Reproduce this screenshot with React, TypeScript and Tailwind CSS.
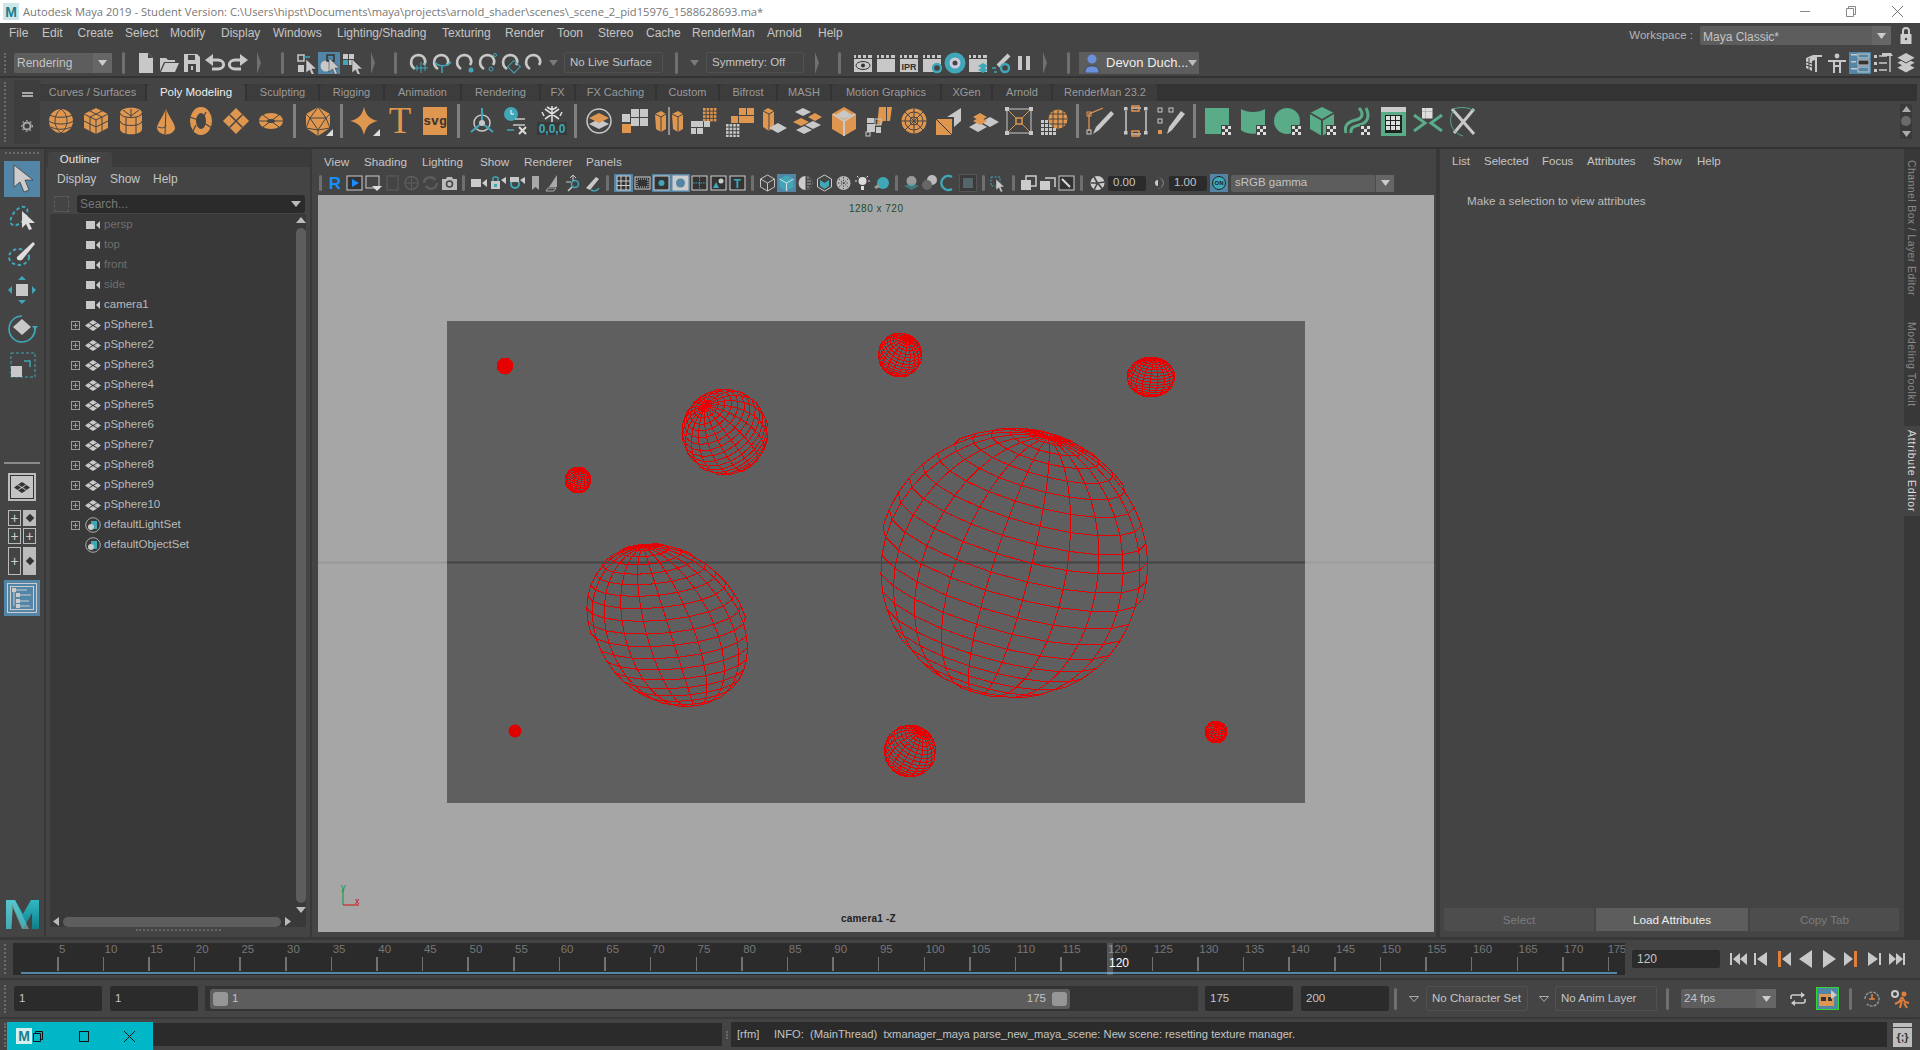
import React from 'react';

const o = '#df964f', g = '#c8c8c8', t = '#3fa7b7', m = '#5aab88', d = '#444444';

function S({ s = 32, children }: { s?: number; children?: React.ReactNode }) {
  return <svg width={s} height={s} viewBox={`0 0 ${s} ${s}`} className="block shrink-0">{children}</svg>;
}
const L = ({ p, c = d, w = 1 }: { p: string; c?: string; w?: number }) => <path d={p} fill="none" stroke={c} strokeWidth={w} />;
const F = ({ p, c = g }: { p: string; c?: string }) => <path d={p} fill={c} />;
const Grid = ({ x, y, n, a, c = g, gap = 1 }: { x: number; y: number; n: number; a: number; c?: string; gap?: number }) => (
  <g>{Array.from({ length: n * n }).map((_, i) => <rect key={i} x={x + (i % n) * (a + gap)} y={y + Math.floor(i / n) * (a + gap)} width={a} height={a} fill={c} />)}</g>
);
const Check = ({ x, y }: { x: number; y: number }) => (
  <g>
    <rect x={x} y={y} width={11} height={11} fill="#444" />
    <rect x={x + 1} y={y + 1} width={3} height={3} fill="#ddd" /><rect x={x + 7} y={y + 1} width={3} height={3} fill="#ddd" />
    <rect x={x + 4} y={y + 4} width={3} height={3} fill="#ddd" />
    <rect x={x + 1} y={y + 7} width={3} height={3} fill="#ddd" /><rect x={x + 7} y={y + 7} width={3} height={3} fill="#ddd" />
  </g>
);
const Cur = ({ x = 0, y = 0, k = 1 }: { x?: number; y?: number; k?: number }) => (
  <path transform={`translate(${x} ${y}) scale(${k})`} d="M0 0v14l3.5-3 2.5 5.5 2.5-1-2.5-5.5h4.5z" fill={g} stroke="#333" strokeWidth={0.5} />
);
const Corner = () => <F p="M31 24v7h-7z" c="#ddd" />;
const Dia = ({ cx, cy, w = 10, h = 5, c = g }: { cx: number; cy: number; w?: number; h?: number; c?: string }) => (
  <F c={c} p={`M${cx - w} ${cy}L${cx} ${cy - h}L${cx + w} ${cy}L${cx} ${cy + h}z`} />
);

const shelfA: React.ReactNode[] = [
  <S key="a"><circle cx={16} cy={16} r={12} fill={o} /><L p="M4 16c4 4 20 4 24 0M5 10c5 3 17 3 22 0M6 22c5 3 15 3 20 0M16 4c-8 6-8 18 0 24M16 4c8 6 8 18 0 24" /></S>,
  <S key="b"><F c={o} p="M16 3l12 6v14l-12 6-12-6V9z" /><L p="M4 9l12 6 12-6M16 15v14M10 6l12 6v14M22 6l-12 6v14M4 16l12 6 12-6" /></S>,
  <S key="c"><F c={o} p="M5 8c0-7 22-7 22 0v16c0 7-22 7-22 0z" /><L p="M5 8c0 6 22 6 22 0M5 16c0 6 22 6 22 0M16 4v8M8 5l8 6 8-6M11 12v17M21 12v17" /></S>,
  <S key="d"><F c={o} p="M16 3c2 8 9 15 9 20a9 6.5 0 0 1-18 0c0-5 7-12 9-20z" /><L p="M16 3l-1 26M8 22c5 2 8 0 8-2" /></S>,
  <S key="e"><ellipse cx={16} cy={16} rx={8} ry={11} fill="none" stroke={o} strokeWidth={6} /><L p="M5 12l8 3M21 7l-3 6M19 18l8 5M11 20l-3 6" c={d} w={1.2} /></S>,
  <S key="f"><F c={o} p="M16 3l13 13-13 13L3 16z" /><L p="M9.5 9.5l13 13M22.5 9.5l-13 13" w={1.5} /></S>,
  <S key="g"><ellipse cx={16} cy={16} rx={12} ry={8} fill={o} /><ellipse cx={16} cy={16} rx={4} ry={2} fill={d} /><L p="M4 16h24M8 10l16 12M24 10L8 22" /></S>,
];
const platonic = <S key="h"><F c={o} p="M16 2l12 7v14l-12 8-12-8V9z" /><L p="M16 2l8 11H8zM4 9l4 4-4 10M28 9l-4 4 4 10M8 13l8 12 8-12M4 23l12 2 12-2M16 25v6" /><Corner /></S>;
const shelfB: React.ReactNode[] = [
  <S key="i"><F c={o} p="M15 2C17 10 20 14 29 16C20 18 17 22 15 30C13 22 10 18 1 16C10 14 13 10 15 2z" /><Corner /></S>,
  <div key="j" className="font-['Liberation_Serif',serif] text-[37px] leading-[32px] h-[32px] text-[#df964f]">T</div>,
  <div key="k" className="w-[24px] h-[28px] bg-[#df964f] text-[#333] text-[13px] font-bold flex items-center justify-center font-['Liberation_Mono',monospace]">svg</div>,
];
const shelfC: React.ReactNode[] = [
  <S key="l"><circle cx={16} cy={18} r={8} fill="none" stroke={g} strokeWidth={1.5} /><L p="M16 3v15M16 18l-11 9M16 18l11 9" c={t} w={2} /><circle cx={16} cy={18} r={3} fill={g} /></S>,
  <S key="m"><circle cx={10} cy={9} r={7} fill={t} /><L p="M10 5v4h3" c="#fff" w={1} /><L p="M14 14h10M12 20h12" c={g} w={1.5} /><L p="M6 25h7" c={t} w={1.5} /><L p="M18 22l7 7M25 22l-7 7" c="#ddd" w={2} /></S>,
  <S key="n"><L p="M16 1v16M9 4l14 10M23 4L9 14M11 2l5 3 5-3M6 7l2 4M26 7l-2 4" c="#ddd" w={1.6} /><rect x={1} y={17} width={30} height={13} fill="#383838" /><text x={16} y={28} fontSize={12} fontWeight={700} textAnchor="middle" fill={t} fontFamily="Liberation Sans">0,0,0</text></S>,
];
const shelfD: React.ReactNode[] = [
  <S key="o"><circle cx={16} cy={16} r={12} fill="none" stroke={g} strokeWidth={1.5} /><Dia cx={16} cy={19} c={g} /><Dia cx={16} cy={13} c={o} /></S>,
  <S key="p"><Grid x={13} y={4} n={2} a={8} c={g} /><rect x={4} y={19} width={9} height={9} fill={o} /><rect x={4} y={9} width={8} height={8} fill={g} /></S>,
  <S key="q"><F c={o} p="M2 9l6-3 5 3v15l-5 3-5-3z" /><F c={o} p="M19 9l6-3 5 3v15l-5 3-5-3z" /><L p="M2 9l6 3 5-3M8 12v15M19 9l6 3 5-3M25 12v15" /><L p="M16 2v28" c="#ddd" w={1} /></S>,
  <S key="r"><Grid x={15} y={3} n={4} a={2.6} c={o} /><rect x={3} y={16} width={12} height={6} fill={g} /><rect x={3} y={23} width={5} height={6} fill={g} /><rect x={9} y={23} width={6} height={6} fill={g} /><rect x={16} y={16} width={6} height={6} fill={g} /></S>,
  <S key="s"><rect x={16} y={3} width={7} height={7} fill={o} /><rect x={24} y={3} width={7} height={7} fill={o} /><rect x={16} y={11} width={15} height={7} fill={o} /><rect x={8} y={11} width={7} height={7} fill={o} /><Grid x={3} y={19} n={4} a={2.6} c={g} /></S>,
  <S key="t"><F c={o} p="M5 6l5-3 6 3v16l-5 4-6-4z" /><L p="M5 6l6 3 5-3M11 9v17" /><Dia cx={20} cy={23} w={9} h={5} c={g} /></S>,
  <S key="u"><Dia cx={10} cy={7} w={8} h={4} c={g} /><Dia cx={22} cy={12} w={7} h={4} c={o} /><Dia cx={8} cy={17} w={8} h={4} c={o} /><Dia cx={20} cy={20} w={8} h={4} c={g} /><Dia cx={11} cy={25} w={8} h={4} c={g} /></S>,
  <S key="v"><F c={o} p="M16 2l12 7v15l-12 7-12-7V9z" /><F c={g} p="M16 5l8 5-8 4-8-4z" /><L p="M5 9l11 7 11-7M16 16v15" c={g} w={2} /></S>,
  <S key="w"><F c={o} p="M16 2h7v14h-3l-2 4h-4z" /><F c={o} p="M24 2h5l-2 14h-3z" /><rect x={4} y={19} width={8} height={8} fill={g} /><rect x={13} y={22} width={5} height={6} fill={g} /><rect x={4} y={13} width={7} height={5} fill={g} /><rect x={12} y={14} width={6} height={6} fill="none" stroke={g} /><rect x={3} y={27} width={4} height={4} fill="none" stroke={g} /></S>,
  <S key="x"><circle cx={16} cy={16} r={12.5} fill={o} /><circle cx={16} cy={16} r={4} fill="none" stroke={d} /><circle cx={16} cy={16} r={9} fill="none" stroke={d} /><L p="M3 16h26M16 3v26M7 7l18 18M25 7L7 25" /></S>,
  <S key="y"><F c={o} p="M3 14h16v16H3z" /><L p="M3 14l16 16" c="#333" /><F c={g} p="M14 12L28 3v13l-7 6v-10z" /></S>,
  <S key="z"><Dia cx={22} cy={17} w={9} h={5} c={g} /><Dia cx={10} cy={22} w={9} h={5} c={g} /><Dia cx={12} cy={12} w={7} h={4} c={o} /><Dia cx={12} cy={16} w={7} h={4} c={o} /></S>,
  <S key="aa"><rect x={4} y={4} width={24} height={24} fill="none" stroke={g} strokeWidth={1} /><L p="M4 4l9 9M28 4l-9 9M4 28l9-9M28 28l-9-9" c={o} /><rect x={13} y={13} width={6} height={6} fill="none" stroke={o} strokeWidth={1.5} /><Grid x={2} y={2} n={1} a={4} /><Grid x={26} y={2} n={1} a={4} /><Grid x={2} y={26} n={1} a={4} /><Grid x={26} y={26} n={1} a={4} /></S>,
  <S key="ab"><Grid x={3} y={15} n={4} a={3} c={g} /><circle cx={20} cy={14} r={9.5} fill={o} /><L p="M11 14h18M20 5v18M12 9h16M12 19h16M15 6v16M25 6v16" /></S>,
];
const shelfE: React.ReactNode[] = [
  <S key="ac"><L p="M4 26V9l14-6" c={o} w={1.3} /><rect x={2} y={25} width={4} height={4} fill="none" stroke={g} /><rect x={2} y={7} width={4} height={4} fill="none" stroke={o} /><F p="M8 29l3-7L26 6l3 3-15 16z" /></S>,
  <S key="ad"><L p="M6 6v20M26 6v20M11 3h10M11 29h10" c={g} w={1.5} /><rect x={12} y={1} width={7} height={5} fill="none" stroke={o} strokeWidth={1.5} /><rect x={12} y={26} width={7} height={5} fill="none" stroke={o} strokeWidth={1.5} /><Grid x={4} y={2} n={1} a={3.5} /><Grid x={24} y={2} n={1} a={3.5} /><Grid x={4} y={26} n={1} a={3.5} /><Grid x={24} y={26} n={1} a={3.5} /></S>,
  <S key="ae"><rect x={3} y={3} width={4} height={4} fill="none" stroke={g} /><rect x={14} y={3} width={4} height={4} fill="none" stroke={g} /><rect x={3} y={14} width={4} height={4} fill="none" stroke={g} /><rect x={3} y={25} width={4} height={4} fill={o} /><F p="M12 29l2-7L26 6l4 3-13 16z" /></S>,
];
const shelfF: React.ReactNode[] = [
  <S key="af"><rect x={3} y={3} width={24} height={26} fill={m} /><Check x={19} y={20} /></S>,
  <S key="ag"><F c={m} p="M4 4c6 4 18 4 24 0v21c-5 5-19 5-24 0z" /><Check x={19} y={20} /></S>,
  <S key="ah"><circle cx={15} cy={16} r={13} fill={m} /><Check x={19} y={20} /></S>,
  <S key="ai"><F c={m} p="M15 2l12 6v16l-12 7-12-7V8z" /><L p="M3 8l12 7 12-7M15 15v16" w={1.8} /><Check x={19} y={20} /></S>,
  <S key="aj"><L p="M4 28c-3-10 6-12 10-13 8-2 7-8 3-12M9 28c-1-6 4-7 8-8 9-2 11-9 7-17" c={m} w={3} /><Check x={18} y={20} /></S>,
  <S key="ak"><rect x={4} y={2} width={25} height={29} fill={m} /><rect x={4} y={2} width={25} height={5} fill="#ccc" /><rect x={8} y={10} width={17} height={18} fill="#222" /><Grid x={9} y={11} n={3} a={4} gap={1} c="#ddd" /></S>,
  <S key="al"><L p="M2 10l11 8-11 8M30 10l-11 8 11 8" c={m} w={3} /><Grid x={10} y={3} n={3} a={3.5} gap={0} c="#ddd" /></S>,
  <S key="am"><L p="M5 4l22 25M27 4L7 28" c={g} w={3} /><L p="M6 6c-6 12 0 22 10 25M6 4c10-3 16-1 22 2" c={m} w={1} /></S>,
];

function Slot({ children, w = 'w-[35px]' }: { children?: React.ReactNode; w?: string }) {
  return <div className={`${w} shrink-0 flex items-center justify-center`}>{children}</div>;
}
const ShelfSep = () => <div className="w-[12px] shrink-0 flex justify-center"><div className="w-[3px] h-[34px] bg-[#808080]" /></div>;
const Sep = ({ cls = 'h-[22px]' }: { cls?: string }) => <div className={`w-[3px] shrink-0 rounded-sm bg-[#6f6f6f] ${cls}`} />;
const Arrow = () => <svg width={4} height={22} className="block shrink-0"><path d="M0 0L4 11L0 22z" fill="#707070" /></svg>;
const Dots = ({ cls = 'h-[20px]' }: { cls?: string }) => <div className={`w-[2px] shrink-0 border-l-2 border-dotted border-[#6a6a6a] ${cls}`} />;
const Tri = ({ c = '#b5b5b5', w = 10 }: { c?: string; w?: number }) => <svg width={w} height={6} className="block shrink-0"><path d={`M0 0H${w}L${w / 2} 6z`} fill={c} /></svg>;

const statusFile = [
  <S key="1" s={22}><F p="M4 1h9l5 5v15H4z" /><F c="#444" p="M13 1v5h5z" /></S>,
  <S key="2" s={22}><F p="M2 6h6l2 2h7v2H6l-4 9zM7 11h14l-4 9H3z" /></S>,
  <S key="3" s={22}><F p="M3 2h13l3 3v15H3z" /><rect x={7} y={3} width={7} height={5} fill="#444" /><rect x={7} y={12} width={8} height={8} fill="#444" /><rect x={10} y={14} width={2} height={4} fill={g} /></S>,
  <S key="4" s={22}><L p="M4 8h10a5 4 0 0 1 0 9H8" c={g} w={3} /><F p="M9 2v12L1 8z" /></S>,
  <S key="5" s={22}><L p="M18 8H8a5 4 0 0 0 0 9h6" c={g} w={3} /><F p="M13 2v12l8-6z" /></S>,
];
const statusSel = [
  <S key="1" s={22}><rect x={3} y={3} width={6} height={6} fill="none" stroke={g} strokeWidth={1.5} /><rect x={3} y={13} width={6} height={7} fill={g} /><L p="M9 5h6" c={t} w={1.5} /><Cur x={11} y={7} /></S>,
  <div key="2" className="w-[22px] h-[22px] bg-[#5285a6] flex items-center justify-center"><S s={22}><circle cx={8} cy={14} r={5.5} fill={g} /><rect x={9} y={3} width={7} height={6} fill="none" stroke="#333" strokeWidth={1.5} /><Cur x={11} y={6} /></S></div>,
  <S key="3" s={22}><Grid x={2} y={2} n={2} a={5} /><rect x={2} y={8} width={5} height={5} fill={t} /><Cur x={11} y={7} /></S>,
];
const Mag = ({ children }: { children?: React.ReactNode }) => <S s={22}><L p="M7 17C1 13 2 4 10 3c6 0 9 6 6 10" c={g} w={2.6} />{children}</S>;
const statusSnap = [
  <Mag key="1"><L p="M6 16h14M13 10v11M9 13v6M17 11v8" c={t} w={1} /></Mag>,
  <Mag key="2"><L p="M4 10c3 5 12 5 16 0M11 14v7" c={t} w={1.5} /></Mag>,
  <Mag key="3"><circle cx={17} cy={18} r={2.5} fill={t} /></Mag>,
  <Mag key="4"><circle cx={18} cy={3} r={1.5} fill="none" stroke={t} /><circle cx={14} cy={17} r={2} fill="none" stroke={t} /></Mag>,
  <Mag key="5"><rect x={10} y={10} width={9} height={9} fill="none" stroke={t} transform="rotate(45 14 14)" /></Mag>,
  <Mag key="6" />,
];
const Clap = ({ children }: { children?: React.ReactNode }) => (
  <S s={22}><rect x={2} y={3} width={18} height={3} fill={g} /><rect x={4} y={3} width={2} height={3} fill="#444" /><rect x={9} y={3} width={2} height={3} fill="#444" /><rect x={14} y={3} width={2} height={3} fill="#444" /><rect x={2} y={7} width={18} height={13} fill={g} />{children}</S>
);
const statusRender = [
  <Clap key="1"><ellipse cx={11} cy={13.5} rx={7} ry={4} fill="none" stroke="#333" /><circle cx={11} cy={13.5} r={2} fill="#333" /></Clap>,
  <Clap key="2" />,
  <Clap key="3"><text x={11} y={18} fontSize={9} fontWeight={700} textAnchor="middle" fill="#333" fontFamily="Liberation Sans">IPR</text></Clap>,
  <Clap key="4"><circle cx={16} cy={16} r={4} fill="#444" stroke={t} strokeWidth={2.4} /></Clap>,
  <S key="5" s={22}><circle cx={11} cy={11} r={8} fill="#ccd" stroke={t} strokeWidth={5} /><circle cx={11} cy={11} r={2.5} fill="#444" /></S>,
  <Clap key="6"><Dia cx={16} cy={14} w={5} h={3} c={t} /><Dia cx={16} cy={18} w={5} h={3} c={t} /></Clap>,
  <S key="7" s={22}><L p="M8 14L19 3" c={g} w={4} /><circle cx={15} cy={16} r={4} fill="none" stroke={t} strokeWidth={2.4} /><L p="M2 16h4M4 20h3" c={t} w={1.3} /></S>,
  <S key="8" s={22}><rect x={5} y={4} width={4} height={14} fill={g} /><rect x={13} y={4} width={4} height={14} fill={g} /></S>,
];
const rightTop = [
  <S key="1" s={22}><F p="M3 6l7-3 9 0v2h-5v15h-2V8l-3 1v10l-6-3z" /><L p="M3 10l6 2M3 13l6 2M6 6v12" c="#444" /></S>,
  <S key="2" s={22}><circle cx={11} cy={4} r={2.4} fill={g} /><F p="M2 8h18v2h-5v11h-2v-6h-4v6H7V10H2z" /><rect x={9} y={10} width={4} height={3} fill="#444" /></S>,
  <div key="3" className="w-[22px] h-[22px] bg-[#5285a6]"><S s={22}><rect x={2} y={2} width={6} height={1.5} fill={g} /><rect x={9} y={2} width={11} height={4} fill="none" stroke={g} /><rect x={2} y={9} width={5} height={1.5} fill={g} /><rect x={9} y={8} width={11} height={5} fill="#333" stroke={g} /><rect x={2} y={16} width={6} height={1.5} fill={g} /><rect x={9} y={15} width={11} height={5} fill="none" stroke={g} /></S></div>,
  <S key="4" s={22}><Grid x={2} y={3} n={1} a={3} /><Grid x={2} y={10} n={1} a={3} /><Grid x={2} y={17} n={1} a={3} /><L p="M7 4h8M7 11h8M7 18h8M18 3v17" c={g} w={1.4} /><F p="M10 1h9l2 3H10z" /></S>,
  <S key="5" s={22}><Dia cx={11} cy={6} w={9} h={5} /><Dia cx={11} cy={11} w={9} h={5} /><L p="M2 11l9 5 9-5" c="#444" /><Dia cx={11} cy={16} w={9} h={5} /><L p="M2 16l9 5 9-5" c="#444" /><L p="M2 6l9 5 9-5" c="#444" /></S>,
];

const Diamonds = ({ c = g, s = 16 }: { c?: string; s?: number }) => (
  <svg width={s} height={(s * 11) / 16} viewBox="0 0 16 11" className="block shrink-0">
    <path d="M8 0l4 2.5-4 2.5-4-2.5zM3.5 3l3.5 2.5-3.5 2.5L0 5.5zM12.5 3l3.5 2.5-3.5 2.5-3.5-2.5zM8 6l4 2.5-4 2.5-4-2.5z" fill={c} />
  </svg>
);
const CamIcon = () => <svg width={14} height={8} className="block shrink-0"><rect width={9} height={8} fill={g} /><path d="M10 4l4-4v8z" fill={g} /></svg>;
const SetIcon = () => <svg width={16} height={16} className="block shrink-0"><circle cx={8} cy={8} r={7.3} fill="none" stroke="#aaa" /><path d="M6 4h6v8H9a4 4 0 0 0-3-4z" fill={t} /><circle cx={6} cy={10} r={3} fill="#ccc" /></svg>;
const Plus = () => <svg width={9} height={9} className="block shrink-0"><rect x={0.5} y={0.5} width={8} height={8} fill="none" stroke="#9a9a9a" /><path d="M2 4.5h5M4.5 2v5" stroke="#9a9a9a" /></svg>;

function Row({ name, plus, icon, dim }: { name: string; plus?: boolean; icon: React.ReactNode; dim?: boolean }) {
  return (
    <div className="h-[20px] flex items-center shrink-0">
      <div className="w-[21px] ml-[21px] shrink-0">{plus && <Plus />}</div>
      <div className="w-[18px] shrink-0 flex justify-center ml-[-8px]">{icon}</div>
      <span className={`ml-[2px] ${dim ? 'text-[#6e6e6e]' : 'text-[#b9b9b9]'}`}>{name}</span>
    </div>
  );
}

function Wire({ cx, cy, m: M, pole, n = 20 }: { cx: number; cy: number; m: [number, number, number, number]; pole: [number, number, number]; n?: number }) {
  const len = Math.hypot(...pole);
  const p = pole.map((v) => v / len);
  const a = Math.abs(p[2]) < 0.9 ? [0, 0, 1] : [1, 0, 0];
  const cross = (x: number[], y: number[]) => [x[1] * y[2] - x[2] * y[1], x[2] * y[0] - x[0] * y[2], x[0] * y[1] - x[1] * y[0]];
  let u = cross(a, p);
  const ul = Math.hypot(u[0], u[1], u[2]);
  u = u.map((v) => v / ul);
  const v = cross(p, u);
  const pt = (i: number, j: number) => {
    const phi = (Math.PI * i) / n, th = (2 * Math.PI * j) / n;
    const q = [0, 1, 2].map((k) => Math.sin(phi) * (Math.cos(th) * u[k] + Math.sin(th) * v[k]) + Math.cos(phi) * p[k]);
    return { x: cx + M[0] * q[0] + M[1] * q[1], y: cy + M[2] * q[0] + M[3] * q[1], z: q[2] };
  };
  let d2 = '';
  for (let i = 0; i <= n; i++) for (let j = 0; j < n; j++) {
    const A = pt(i, j), B = pt(i, j + 1), C = pt(i + 1, j);
    if (i > 0 && i < n && A.z > -0.03 && B.z > -0.03) d2 += `M${A.x.toFixed(1)} ${A.y.toFixed(1)}L${B.x.toFixed(1)} ${B.y.toFixed(1)}`;
    if (i < n && A.z > -0.03 && C.z > -0.03) d2 += `M${A.x.toFixed(1)} ${A.y.toFixed(1)}L${C.x.toFixed(1)} ${C.y.toFixed(1)}`;
  }
  return <path d={d2} fill="none" stroke="#e80000" strokeWidth={1} shapeRendering="crispEdges" />;
}

function Scene() {
  return (
    <svg width={1116} height={737} viewBox="318 195 1116 737" className="block">
      <rect x={447} y={321} width={858} height={482} fill="#5f5f5f" />
      <path d="M318 562.5H447" stroke="#989898" strokeWidth={2} />
      <path d="M1305 562.5H1434" stroke="#9c9c9c" strokeWidth={2} />
      <path d="M447 562.5H1305" stroke="#444" strokeWidth={2} />
      <Wire cx={1013} cy={563} m={[135, 0, 0, 135]} pole={[0.26, -0.93, 0.25]} n={22} />
      <Wire cx={668} cy={625} m={[81, 9, 9, 81]} pole={[-0.2, -0.95, 0.25]} n={20} />
      <Wire cx={725} cy={432} m={[43, 0, 0, 43]} pole={[-0.45, -0.6, 0.65]} />
      <Wire cx={900} cy={355} m={[22, 0, 0, 22]} pole={[0.3, -0.7, 0.6]} />
      <Wire cx={1151} cy={377} m={[24, 0, 0, 20]} pole={[0.1, -0.9, 0.4]} />
      <Wire cx={910} cy={751} m={[26, 0, 0, 26]} pole={[0.4, -0.7, 0.55]} />
      <Wire cx={578} cy={480} m={[13, 0, 0, 13]} pole={[0.2, -0.8, 0.5]} />
      <Wire cx={1216} cy={732} m={[11, 0, 0, 11]} pole={[0.2, -0.8, 0.5]} />
      <circle cx={505} cy={366} r={8} fill="#d40000" />
      <Wire cx={505} cy={366} m={[8, 0, 0, 8]} pole={[0.2, -0.8, 0.5]} />
      <circle cx={515} cy={731} r={6.5} fill="#e00000" />
      <path d="M343 905V889" stroke="#0a9a3a" strokeWidth={1} />
      <path d="M343 905H359" stroke="#d01010" strokeWidth={1} />
      <text x={341} y={890} fontSize={9} fill="#0a9a3a" fontFamily="Liberation Sans">y</text>
      <text x={355} y={904} fontSize={9} fill="#c01010" fontFamily="Liberation Sans">x</text>
    </svg>
  );
}

const menuTop: [string, string][] = [['File', 'w-[33px]'], ['Edit', 'w-[35.5px]'], ['Create', 'w-[47.5px]'], ['Select', 'w-[45px]'], ['Modify', 'w-[51px]'], ['Display', 'w-[52px]'], ['Windows', 'w-[64px]'], ['Lighting/Shading', 'w-[105px]'], ['Texturing', 'w-[63px]'], ['Render', 'w-[52px]'], ['Toon', 'w-[41px]'], ['Stereo', 'w-[48px]'], ['Cache', 'w-[46px]'], ['RenderMan', 'w-[75px]'], ['Arnold', 'w-[51px]'], ['Help', 'w-[40px]']];
const tabs: [string, string][] = [['Curves / Surfaces', 'w-[105px]'], ['Poly Modeling', 'w-[98px]'], ['Sculpting', 'w-[71px]'], ['Rigging', 'w-[63px]'], ['Animation', 'w-[75px]'], ['Rendering', 'w-[77px]'], ['FX', 'w-[33px]'], ['FX Caching', 'w-[79px]'], ['Custom', 'w-[61px]'], ['Bifrost', 'w-[56px]'], ['MASH', 'w-[52px]'], ['Motion Graphics', 'w-[108px]'], ['XGen', 'w-[49px]'], ['Arnold', 'w-[58px]'], ['RenderMan 23.2', 'w-[104px]']];

const Menu = ({ items }: { items: [string, string][] }) => <>{items.map(([n, w]) => <div key={n} className={`${w} shrink-0`}>{n}</div>)}</>;
const Field = ({ cls, children }: { cls: string; children?: React.ReactNode }) => <div className={`${cls} shrink-0 h-[25px] bg-[#2b2b2b] rounded-[2px] flex items-center pl-[5px] text-[#c4c4c4]`}>{children}</div>;
const Box = ({ cls, children }: { cls: string; children?: React.ReactNode }) => <div className={`${cls} shrink-0 border border-[#515151] rounded-[2px] flex items-center pl-[5px] whitespace-nowrap`}>{children}</div>;

const V = ({ children }: { children?: React.ReactNode }) => <Slot w="w-[19px]"><svg width={19} height={18} viewBox="0 0 19 18" className="block">{children}</svg></Slot>;
const VA = ({ children }: { children?: React.ReactNode }) => <Slot w="w-[19px]"><svg width={19} height={18} viewBox="0 0 19 18" className="block bg-[#5285a6]">{children}</svg></Slot>;
const VSep = ({ w }: { w: string }) => <div className={`${w} shrink-0 flex justify-center`}><Sep cls="h-[16px]" /></div>;

const Tile = ({ children }: { children?: React.ReactNode }) => (<>
  <rect x={3} y={2} width={13} height={14} fill="#333" stroke="#d0d0d0" />{children}</>);

function ViewBar() {
  return (
    <div className="h-[18px] flex items-center shrink-0">
      <div className="ml-[7px] mr-[3.5px]"><Sep cls="h-[16px]" /></div>
      <Slot w="w-[19px]"><span className="text-[#1a8cff] font-bold text-[17px] leading-none font-['Liberation_Sans',sans-serif]">R</span></Slot>
      <V><rect x={2} y={2} width={15} height={14} fill="#333" stroke="#ccc" /><path d="M7 5v8l7-4z" fill="#1a8cff" /></V>
      <V><rect x={2} y={2} width={13} height={12} fill="none" stroke="#ccc" /><path d="M8 12h10l-5 5z" fill="#ddd" /></V>
      <V><rect x={4} y={2} width={11} height={14} fill="none" stroke="#555" strokeWidth={1.5} /></V>
      <V><circle cx={9.5} cy={9} r={6.5} fill="none" stroke="#5c5c5c" strokeWidth={1.5} /><path d="M3 9h13M9.5 3v12" stroke="#5c5c5c" /></V>
      <V><path d="M3 9a6 6 0 0 1 11-3M16 9a6 6 0 0 1-11 3" fill="none" stroke="#5c5c5c" strokeWidth={2.5} /></V>
      <V><path d="M2 5h4l1-2h5l1 2h4v11H2z" fill="#bbb" /><circle cx={9.5} cy={10} r={3} fill="none" stroke="#444" strokeWidth={1.5} /></V>
      <VSep w="w-[10px]" />
      <V><rect x={2} y={5} width={10} height={8} fill="#ccc" /><path d="M13 9l5-4v8z" fill="#ccc" /></V>
      <V><rect x={3} y={7} width={9} height={8} fill={g} /><path d="M5 7V4a3 3 0 0 1 5 0v3" fill="none" stroke={t} strokeWidth={1.5} /><rect x={6} y={10} width={3} height={3} fill={t} /><path d="M13 6l5-3v7z" fill="#ccc" /></V>
      <V><circle cx={8} cy={10} r={4} fill="none" stroke={t} strokeWidth={2} /><rect x={3} y={3} width={9} height={5} fill={g} /><path d="M13 6l5-3v7z" fill="#ccc" /></V>
      <V><path d="M6 2h7v14l-3.5-3L6 16z" fill="#a8a8a8" /></V>
      <V><path d="M4 13L12 1v12z" fill="#a8a8a8" /><path d="M3 14h8l-2 3H1z" fill="none" stroke="#aaa" /></V>
      <V><circle cx={11} cy={10} r={3.5} fill="none" stroke={t} strokeWidth={1.5} /><path d="M8 13l-4 4" stroke={g} strokeWidth={1.6} /><path d="M9 1l3 3M9 1L6 4M2 8H7M9 1v6" stroke={g} /></V>
      <V><path d="M3 14L13 3l3 2-9 11z" fill={g} /><path d="M8 16c4 2 7 0 8-2" stroke={t} fill="none" strokeWidth={1.4} /></V>
      <VSep w="w-[12px]" />
      <VA><Tile><path d="M7 2v14M12 2v14M3 7h13M3 11.5h13" stroke="#d0d0d0" /></Tile></VA>
      <V><rect x={2} y={3} width={15} height={12} fill="#333" stroke="#d0d0d0" /><rect x={4} y={5} width={11} height={8} fill="none" stroke="#d0d0d0" strokeDasharray="1 1" /></V>
      <VA><rect x={2} y={2} width={15} height={14} fill="#333" stroke="#d0d0d0" /><circle cx={9.5} cy={9} r={3} fill={t} /></VA>
      <VA><rect x={2} y={2} width={15} height={14} fill="#ccc" stroke="#d0d0d0" /><circle cx={9.5} cy={9} r={4.5} fill="#5285a6" /></VA>
      <V><rect x={2} y={2} width={15} height={14} fill="#333" stroke="#d0d0d0" /><path d="M9.5 3v12M3 9h13" stroke={t} strokeDasharray="1.5 1" /></V>
      <V><rect x={2} y={2} width={15} height={14} fill="#333" stroke="#d0d0d0" /><path d="M4 14l3-6 3 6z" fill={t} /><circle cx={12} cy={7} r={2.5} fill="#ccc" /></V>
      <V><rect x={2} y={2} width={15} height={14} fill="#333" stroke="#d0d0d0" /><text x={9.5} y={14} fontSize={12} fontWeight={700} fill={t} textAnchor="middle" fontFamily="Liberation Sans">T</text></V>
      <VSep w="w-[11px]" />
      <V><path d="M9.5 1l7 4v8l-7 4-7-4V5zM2.5 5l7 4 7-4M9.5 9v8" fill="none" stroke="#c4c4c4" /></V>
      <VA><path d="M9.5 1l7 4v8l-7 4-7-4V5z" fill={t} /><path d="M2.5 5l7 4 7-4M9.5 9v8" fill="none" stroke="#ddd" /></VA>
      <V><circle cx={9.5} cy={9} r={7} fill="#ccc" /><path d="M9.5 2a7 7 0 0 1 0 14z" fill="#444" /><path d="M11 4h2M11 7h4M11 10h4M11 13h2" stroke="#aaa" /></V>
      <V><path d="M9.5 1l7 4v8l-7 4-7-4V5z" fill="none" stroke="#ccc" /><path d="M5 6l4.5 3 4.5-3v6l-4.5 3L5 12z" fill={t} /></V>
      <V><circle cx={9.5} cy={9} r={7} fill="#b8b8b8" /><path d="M4 9h11M9.5 3v12M5 5l9 8M14 5l-9 8" stroke="#444" strokeDasharray="1.4 1.4" /></V>
      <V><circle cx={9.5} cy={7} r={4} fill="#ddd" /><rect x={8} y={12} width={3} height={4} fill="#ddd" /><path d="M2 7h2M15 7h2M4 2l1.5 1.5M15 2l-1.5 1.5" stroke="#ddd" /></V>
      <V><circle cx={11} cy={9} r={6} fill={t} /><path d="M2 13l4-3 2 3-4 2z" fill="#999" /></V>
      <VSep w="w-[11px]" />
      <V><circle cx={9.5} cy={7} r={5} fill="#999" /><path d="M2 12l7.5-3 7.5 3-7.5 4z" fill={t} opacity={0.5} /></V>
      <V><circle cx={11} cy={6} r={5} fill="#bbb" /><circle cx={6} cy={11} r={5} fill="#666" /></V>
      <V><path d="M12 3a7 7 0 1 0 0 12" fill="none" stroke={t} strokeWidth={2.5} /></V>
      <Slot w="w-[19px]"><div className="w-[18px] h-[18px] bg-[#3b3b3b] border border-[#555] flex items-center justify-center"><div className="w-[10px] h-[10px] bg-[#54666a]" /></div></Slot>
      <VSep w="w-[11px]" />
      <V><rect x={2} y={3} width={9} height={9} fill="none" stroke={t} strokeDasharray="2 1.5" /><g transform="translate(7 5) scale(.8)"><Cur /></g></V>
      <VSep w="w-[11px]" />
      <V><rect x={2} y={6} width={10} height={10} fill="#ccc" /><rect x={7} y={2} width={10} height={10} fill="none" stroke="#ccc" strokeWidth={1.5} /></V>
      <V><rect x={2} y={7} width={10} height={9} fill="#ccc" /><path d="M7 4h10v9" fill="none" stroke="#ccc" strokeWidth={1.5} /></V>
      <V><rect x={2} y={2} width={15} height={14} fill="#333" stroke="#ccc" /><path d="M5 5l8 8" stroke="#ddd" strokeWidth={2} /></V>
      <VSep w="w-[12px]" />
      <V><circle cx={9.5} cy={9} r={7} fill="#ccc" /><path d="M9.5 9L6 3M9.5 9l7-1M9.5 9l-3 6M9.5 9L3 9M9.5 9l5 6" stroke="#444" strokeWidth={1.6} /></V>
      <div className="ml-[1.5px] w-[38px] h-[15px] bg-[#2b2b2b] rounded-[2px] flex items-center pl-[5px] text-[#c4c4c4] shrink-0 text-[11.5px]">0.00</div>
      <div className="ml-[2px] w-[20px] shrink-0 flex justify-center"><svg width={12} height={12} className="block"><circle cx={6} cy={6} r={5.5} fill="#ccc" /><path d="M0 0h5a6 6 0 0 1 0 12H0z" fill="#444" /><path d="M6 3a3 3 0 0 0 0 6z" fill="#ccc" /></svg></div>
      <div className="ml-[1px] w-[38px] h-[15px] bg-[#2b2b2b] rounded-[2px] flex items-center pl-[5px] text-[#c4c4c4] shrink-0 text-[11.5px]">1.00</div>
      <div className="ml-[3px] w-[18px] h-[18px] bg-[#5285a6] flex items-center justify-center shrink-0"><div className="w-[14px] h-[14px] rounded-full bg-[#3fa7b7] border border-[#222] text-[6px] font-bold text-[#222] flex items-center justify-center">ON</div></div>
      <div className="ml-[3px] w-[163px] h-[17px] bg-[#5d5d5d] rounded-[2px] flex items-center shrink-0 text-[#c4c4c4]"><span className="flex-1 pl-[4px]">sRGB gamma</span><div className="w-[19px] h-[17px] bg-[#666] border-l border-[#4b4b4b] flex items-center justify-center"><Tri w={9} c="#ccc" /></div></div>
    </div>
  );
}

const play = [
  <S key="1" s={22}><path d="M4 5h2v12H4zM14 5v12l-7-6zM21 5v12l-7-6z" fill={g} /></S>,
  <S key="2" s={22}><path d="M5 5h2v12H5zM18 4v14l-10-7z" fill={g} /></S>,
  <S key="3" s={22}><path d="M6 3h3v16H6z" fill="#df7f3a" /><path d="M19 4v14l-9-7z" fill={g} /></S>,
  <S key="4" s={22}><path d="M17 2v18L4 11z" fill={g} /></S>,
  <S key="5" s={22}><path d="M5 2v18l13-9z" fill={g} /></S>,
  <S key="6" s={22}><path d="M13 3h3v16h-3z" fill="#df7f3a" /><path d="M3 4v14l9-7z" fill={g} /></S>,
  <S key="7" s={22}><path d="M15 5h2v12h-2zM4 4v14l10-7z" fill={g} /></S>,
  <S key="8" s={22}><path d="M16 5h2v12h-2zM2 5v12l7-6zM9 5v12l7-6z" fill={g} /></S>,
];

const spheres = Array.from({ length: 10 }, (_, i) => `pSphere${i + 1}`);
const ticks = Array.from({ length: 35 }, (_, i) => (i + 1) * 5);

export default function App() {
  return (
    <div className="relative w-[1920px] h-[1050px] overflow-hidden bg-[#444444] flex flex-col text-[11.5px] leading-none text-[#c4c4c4] font-['Liberation_Sans',sans-serif] whitespace-nowrap">
      {/* title bar */}
      <div className="h-[23px] shrink-0 bg-white flex items-center">
        <div className="ml-[3px] w-[16px] h-[17px] bg-[#cfe6e8] flex items-center justify-center shrink-0 text-[#17808d] font-bold text-[14px]">M</div>
        <span className="ml-[4px] text-[11.2px] text-[#777] font-['Open_Sans',sans-serif]">Autodesk Maya 2019 - Student Version: C:\Users\hipst\Documents\maya\projects\arnold_shader\scenes\_scene_2_pid15976_1588628693.ma*</span>
        <div className="ml-auto flex items-center">
          <Slot w="w-[46px]"><div className="w-[10px] h-px bg-[#888]" /></Slot>
          <Slot w="w-[46px]"><svg width={10} height={11} className="block"><path d="M0.5 2.5h7v8h-7zM2.5 2.5v-2h7v8h-2" fill="none" stroke="#888" /></svg></Slot>
          <Slot w="w-[46px]"><svg width={11} height={11} className="block"><path d="M0 0l11 11M11 0L0 11" stroke="#777" /></svg></Slot>
        </div>
      </div>
      {/* menu */}
      <div className="h-[23px] shrink-0 flex items-center pl-[9px] text-[12px]">
        <div className="flex items-center mb-[3px]"><Menu items={menuTop} /></div>
        <div className="ml-auto mt-[2px] flex items-center">
          <span className="text-[#b5b5b5] text-[11.5px]">Workspace :</span>
          <div className="ml-[7px] w-[191px] h-[19px] bg-[#5d5d5d] rounded-[2px] flex items-center">
            <span className="flex-1 pl-[3px] pt-[2px]">Maya Classic*</span>
            <div className="w-[19px] h-[19px] bg-[#666] flex items-center justify-center"><Tri w={9} c="#ccc" /></div>
          </div>
          <div className="w-[29px] flex justify-center"><svg width={12} height={19} className="block"><path d="M3 8V5a3 3 0 0 1 6 0v3" fill="none" stroke="#ccc" strokeWidth={2} /><rect x={0.5} y={8} width={11} height={10} fill="#ccc" /><circle cx={6} cy={13} r={1.2} fill="#444" /></svg></div>
        </div>
      </div>
      {/* status line */}
      <div className="h-[32px] shrink-0 flex items-center border-b-2 border-[#333333] pt-[3px]">
        <div className="ml-[4px] mr-[8px]"><Dots /></div>
        <div className="w-[98px] h-[20px] bg-[#5d5d5d] rounded-[2px] flex items-center shrink-0 text-[12px]">
          <span className="flex-1 pl-[3px]">Rendering</span>
          <div className="w-[19px] h-[20px] bg-[#666] flex items-center justify-center"><Tri w={9} c="#ccc" /></div>
        </div>
        <div className="ml-[9.5px]"><Sep /></div>
        <div className="flex ml-[9.5px]">{statusFile.map((x, i) => <Slot key={i} w="w-[23px]">{x}</Slot>)}</div>
        <div className="ml-[8px]"><Arrow /></div>
        <div className="ml-[19.5px]"><Sep /></div>
        <div className="flex ml-[10.5px]">{statusSel.map((x, i) => <Slot key={i} w="w-[23px]">{x}</Slot>)}</div>
        <div className="ml-[8px]"><Arrow /></div>
        <div className="ml-[18.5px]"><Sep /></div>
        <div className="flex ml-[10.5px]">{statusSnap.map((x, i) => <Slot key={i} w="w-[23px]">{x}</Slot>)}</div>
        <div className="ml-[4px] w-[10px]"><Tri c="#7a7a7a" w={9} /></div>
        <Box cls="ml-[5px] w-[99px] h-[21px]">No Live Surface</Box>
        <div className="ml-[11.5px]"><Sep /></div>
        <div className="ml-[12.5px] w-[10px]"><Tri c="#7a7a7a" w={9} /></div>
        <Box cls="ml-[6px] w-[98px] h-[21px]">Symmetry: Off</Box>
        <div className="ml-[11px]"><Arrow /></div>
        <div className="ml-[18.5px]"><Sep /></div>
        <div className="flex ml-[10.5px]">{statusRender.map((x, i) => <Slot key={i} w="w-[23px]">{x}</Slot>)}</div>
        <div className="ml-[8px]"><Arrow /></div>
        <div className="ml-[19.5px]"><Sep /></div>
        <div className="ml-[9.5px] w-[120px] h-[22px] bg-[#5d5d5d] flex items-center shrink-0 pl-[5px]">
          <svg width={16} height={20} className="block shrink-0"><circle cx={8} cy={6} r={4.5} fill="#6b8fd8" /><path d="M1 20c0-6 3-6 5-7h4c2 1 5 1 5 7z" fill="#6b8fd8" stroke="#223" strokeWidth={0.5} /></svg>
          <span className="ml-[6px] text-[13px] text-[#eee] flex-1">Devon Duch...</span>
          <div className="mr-[3px]"><Tri w={9} c="#bbb" /></div>
        </div>
        <div className="ml-auto mr-[3px] flex">{rightTop.map((x, i) => <Slot key={i} w="w-[23px]">{x}</Slot>)}</div>
      </div>
      {/* shelf */}
      <div className="h-[71px] shrink-0 flex border-b-2 border-[#333333]">
        <div className="ml-[4px] mr-[8px] mt-[4px]"><Dots cls="h-[60px]" /></div>
        <div className="w-[26px] shrink-0 mt-[2px] h-[64px] bg-[#3e3e3e] flex flex-col items-center justify-between py-[12px]">
          <div className="w-[11px] h-[5px] border-y-2 border-[#aaa]" />
          <svg width={12} height={12} className="block"><circle cx={6} cy={6} r={3.6} fill="none" stroke="#aaa" strokeWidth={2} /><circle cx={6} cy={6} r={5.4} fill="none" stroke="#aaa" strokeWidth={1.2} strokeDasharray="1.5 2.5" /></svg>
        </div>
        <div className="flex-1 flex flex-col min-w-0 pt-[6px]">
          <div className="h-[17px] mr-[3px] bg-[#333333] flex gap-[2px] shrink-0 text-[11px]">
            {tabs.map(([n, w]) => (
              <div key={n} className={`${w} h-[17px] shrink-0 flex items-center justify-center rounded-t-[3px] ${n === 'Poly Modeling' ? 'bg-[#444444] text-[#eeeeee] text-[11.5px]' : 'bg-[#3c3c3c] text-[#9a9a9a]'}`}>{n}</div>
            ))}
          </div>
          <div className="h-[40px] flex items-center pl-[3.5px] shrink-0">
            {shelfA.map((x, i) => <Slot key={i}>{x}</Slot>)}
            <ShelfSep />
            <Slot>{platonic}</Slot>
            <ShelfSep />
            {shelfB.map((x, i) => <Slot key={i}>{x}</Slot>)}
            <ShelfSep />
            {shelfC.map((x, i) => <Slot key={i}>{x}</Slot>)}
            <ShelfSep />
            {shelfD.map((x, i) => <Slot key={i}>{x}</Slot>)}
            <ShelfSep />
            {shelfE.map((x, i) => <Slot key={i}>{x}</Slot>)}
            <ShelfSep />
            {shelfF.map((x, i) => <Slot key={i}>{x}</Slot>)}
            <div className="ml-auto mr-[8px] w-[12px] h-[35px] bg-[#3a3a3a] flex flex-col items-center justify-between py-[2px]">
              <div className="rotate-180"><Tri w={9} c="#aaa" /></div>
              <div className="w-[10px] h-[10px] rounded-full bg-[#6a6a6a]" />
              <Tri w={9} c="#aaa" />
            </div>
          </div>
        </div>
      </div>
      {/* main */}
      <div className="h-[791px] shrink-0 flex border-b-[3px] border-[#383838]">
        {/* toolbox */}
        <div className="w-[44px] shrink-0 flex flex-col items-center relative">
          <div className="mt-[3px] h-[2px] w-[34px] border-t-2 border-dotted border-[#6a6a6a]" />
          <div className="mt-[7px] w-[36px] h-[36px] bg-[#5285a6] flex items-center justify-center"><svg width={28} height={32} className="block"><path d="M6 2v22l6-5 4 10 5-2-4-10h8z" fill="#ccc" stroke="#333" strokeWidth={0.7} /></svg></div>
          <Tool><ellipse cx={13} cy={16} rx={6} ry={11} transform="rotate(40 13 16)" fill="none" stroke={t} strokeWidth={2} strokeDasharray="3.5 2.5" /><path d="M16 11v17l4-4 3 6 3-1-3-6h6z" fill="#ddd" /></Tool>
          <Tool><ellipse cx={13} cy={20} rx={10} ry={8} fill="none" stroke={t} strokeWidth={2} strokeDasharray="3.5 2.5" /><path d="M11 20L27 5l2 2-13 16c-3 1-6 0-5-3z" fill="#ddd" /></Tool>
          <Tool><rect x={10} y={10} width={12} height={12} fill={g} /><path d="M16 2l4 4h-8zM16 30l4-4h-8zM2 16l4-4v8zM30 16l-4-4v8z" fill={t} /></Tool>
          <Tool><path d="M16 5a13 13 0 1 0 13 12" fill="none" stroke={t} strokeWidth={1.6} /><path d="M16 8l9 8-9 8-9-8z" fill={g} /><path d="M26 15h6l-3 4z" fill={t} /></Tool>
          <Tool><rect x={5} y={5} width={24} height={24} fill="none" stroke={t} strokeDasharray="3 2" /><rect x={5} y={18} width={11} height={11} fill={g} /><path d="M18 13h6v6" fill="none" stroke={t} strokeWidth={1.5} /></Tool>
          <div className="mt-[80px] h-[2px] w-[36px] bg-[#8a8a8a]" />
          <div className="mt-[9px] w-[28px] h-[28px] bg-[#bcbcbc] p-[2px]"><div className="w-full h-full border border-[#333] bg-[#c4c4c4] flex items-center justify-center"><Diamonds c="#333" /></div></div>
          <div className="mt-[9px] w-[28px] h-[28px] grid grid-cols-2 gap-[2px]">
            {[0, 1, 2, 3].map((i) => <div key={i} className={`border border-[#bbb] flex items-center justify-center text-[#ccc] text-[14px] ${i === 1 ? 'bg-[#bbb] text-[#333]' : ''}`}>{i === 1 ? <div className="w-[6px] h-[6px] rotate-45 bg-[#333]" /> : '+'}</div>)}
          </div>
          <div className="mt-[9px] w-[28px] h-[28px] grid grid-cols-2 gap-[2px]">
            <div className="border border-[#bbb] flex items-center justify-center text-[14px] text-[#ccc]">+</div>
            <div className="bg-[#bbb] flex items-center justify-center"><div className="w-[6px] h-[6px] rotate-45 bg-[#333]" /></div>
          </div>
          <div className="mt-[5px] w-[36px] h-[36px] bg-[#5285a6] flex items-center justify-center">
            <svg width={30} height={30} className="block"><rect x={0.5} y={0.5} width={29} height={29} fill="none" stroke="#ccc" /><rect x={3.5} y={3.5} width={23} height={23} fill="none" stroke="#ccc" /><rect x={5} y={5} width={4} height={4} fill="#ccc" /><path d="M9 7h11M7 9v14" stroke="#ccc" /><rect x={9} y={10} width={4} height={4} fill="#ccc" /><path d="M13 12h11" stroke="#ccc" /><rect x={9} y={16} width={4} height={4} fill="#ccc" /><path d="M13 18h9" stroke="#ccc" /><rect x={9} y={21} width={4} height={4} fill="#ccc" /><path d="M13 23h10" stroke="#ccc" /></svg>
          </div>
          <div className="mt-auto mb-[7px]">
            <svg width={33} height={30} viewBox="0 0 33 30" className="block">
              <defs><linearGradient id="mg" x1="0" y1="0" x2="0" y2="1"><stop offset="0" stopColor="#2fb9c2" /><stop offset="1" stopColor="#0f7f8c" /></linearGradient></defs>
              <path d="M0 0h9l8 14L25 0h8v29h-7V13L17 29 6 4v25H0z" fill="url(#mg)" />
              <path d="M0 0h9l14 29h-7L7 8l-2 21H0z" fill="#7fd4d8" opacity={0.5} />
            </svg>
          </div>
        </div>
        <div className="w-[2px] shrink-0 bg-[#383838]" />
        {/* outliner */}
        <div className="w-[264px] shrink-0 flex flex-col bg-[#3b3b3b]">
          <div className="mt-[3px] ml-[2px] w-[64px] h-[15px] bg-[#444444] rounded-t-[3px] flex items-center justify-center text-[#e4e4e4] shrink-0">Outliner</div>
          <div className="flex-1 bg-[#444444] flex flex-col min-h-0">
            <div className="h-[23px] flex items-center pl-[11px] shrink-0 text-[12px]"><Menu items={[['Display', 'w-[53px]'], ['Show', 'w-[43px]'], ['Help', 'w-[40px]']]} /></div>
            <div className="h-[19px] flex items-center shrink-0 mt-[4px]">
              <div className="ml-[8px] w-[15px] h-[16px] border border-dashed border-[#5c5c5c]" />
              <div className="ml-[8px] w-[228px] h-[18px] bg-[#2b2b2b] rounded-[3px] flex items-center pl-[3px] pr-[4px] text-[#777] text-[12px]"><span className="flex-1">Search...</span><Tri w={10} c="#bbb" /></div>
            </div>
            <div className="mt-[1px] ml-[4px] w-[256px] h-[713px] bg-[#393939] flex flex-col shrink-0">
              <div className="flex-1 flex min-h-0">
                <div className="flex-1 flex flex-col pt-[1px]">
                  {['persp', 'top', 'front', 'side'].map((n) => <Row key={n} name={n} dim icon={<CamIcon />} />)}
                  <Row name="camera1" icon={<CamIcon />} />
                  {spheres.map((n) => <Row key={n} name={n} plus icon={<Diamonds />} />)}
                  <Row name="defaultLightSet" plus icon={<SetIcon />} />
                  <Row name="defaultObjectSet" icon={<SetIcon />} />
                </div>
                <div className="w-[10px] shrink-0 flex flex-col items-center pt-[3px]">
                  <div className="rotate-180"><Tri w={10} c="#bbb" /></div>
                  <div className="mt-[5px] h-[675px] w-[10px] rounded-full bg-[#5d5d5d]" />
                  <div className="mt-[4px]"><Tri w={10} c="#bbb" /></div>
                </div>
              </div>
              <div className="h-[11px] mt-[2px] flex items-center shrink-0 pl-[3px]">
                <svg width={6} height={9} className="block shrink-0"><path d="M6 0v9L0 4.5z" fill="#bbb" /></svg>
                <div className="ml-[4px] w-[218px] h-[10px] rounded-full bg-[#5d5d5d]" />
                <svg width={6} height={9} className="block shrink-0 ml-[4px]"><path d="M0 0v9l6-4.5z" fill="#bbb" /></svg>
              </div>
            </div>
            <div className="mt-[2px] mx-auto w-[85px] border-t-2 border-dotted border-[#666]" />
          </div>
        </div>
        <div className="w-[2px] shrink-0 bg-[#383838]" />
        {/* viewport */}
        <div className="w-[1124px] shrink-0 flex flex-col">
          <div className="h-[25px] flex items-center pl-[12px] text-[11.7px] shrink-0 pt-[1px]"><Menu items={[['View', 'w-[40px]'], ['Shading', 'w-[58px]'], ['Lighting', 'w-[58px]'], ['Show', 'w-[44px]'], ['Renderer', 'w-[62px]'], ['Panels', 'w-[50px]']]} /></div>
          <ViewBar />
          <div className="relative mt-[3px] ml-[6px] w-[1116px] h-[737px] bg-[#a6a6a6] shrink-0">
            <Scene />
            <div className="absolute left-[531px] top-[9px] text-[10px] text-[#1d4d2a] tracking-[0.5px]">1280 x 720</div>
            <div className="absolute left-[523px] top-[719px] text-[10px] font-bold text-[#222] tracking-[0.2px]">camera1 -Z</div>
          </div>
        </div>
        <div className="w-[4px] shrink-0 bg-[#383838]" />
        {/* attribute editor */}
        <div className="w-[464px] shrink-0 flex flex-col">
          <div className="h-[25px] flex items-center pl-[12px] shrink-0 text-[11.5px]"><Menu items={[['List', 'w-[32px]'], ['Selected', 'w-[58px]'], ['Focus', 'w-[45px]'], ['Attributes', 'w-[66px]'], ['Show', 'w-[44px]'], ['Help', 'w-[40px]']]} /></div>
          <div className="mt-[21px] ml-[27px] text-[11.7px] text-[#bcbcbc]">Make a selection to view attributes</div>
          <div className="mt-auto mb-[6px] ml-[4px] flex gap-[2px] h-[23px] text-[11.7px]">
            <div className="w-[150px] bg-[#4d4d4d] flex items-center justify-center text-[#7c7c7c]">Select</div>
            <div className="w-[152px] bg-[#5d5d5d] flex items-center justify-center text-[#eee]">Load Attributes</div>
            <div className="w-[149px] bg-[#4d4d4d] flex items-center justify-center text-[#7c7c7c]">Copy Tab</div>
          </div>
        </div>
        {/* right tabs */}
        <div className="w-[16px] shrink-0 bg-[#383838] flex flex-col text-[10.5px]">
          <div className="mt-[11px] h-[136px] flex items-center justify-center text-[#888]"><span className="[writing-mode:vertical-rl] tracking-[0.4px]">Channel Box / Layer Editor</span></div>
          <div className="mt-[24px] h-[88px] flex items-center justify-center text-[#888]"><span className="[writing-mode:vertical-rl] tracking-[0.6px]">Modeling Toolkit</span></div>
          <div className="mt-[18px] h-[90px] flex items-center justify-center bg-[#444444] text-[#ddd]"><span className="[writing-mode:vertical-rl] tracking-[0.8px]">Attribute Editor</span></div>
        </div>
      </div>
      {/* time slider */}
      <div className="h-[40px] shrink-0 flex items-center border-b-2 border-[#383838]">
        <div className="ml-[4px] mr-[7px]"><Dots cls="h-[30px]" /></div>
        <div className="w-[1612px] h-[32px] bg-[#2b2b2b] shrink-0 flex flex-col overflow-hidden text-[#777] text-[11.5px]">
          <div className="h-[28px] flex pl-[44px] shrink-0">
            {ticks.map((f) => (
              <div key={f} className="relative w-[45.62px] shrink-0 flex flex-col">
                <span className={`pt-[1px] h-[14px] ${f === 175 ? 'tracking-[-0.4px]' : 'pl-[2px]'}`}>{f}</span>
                {f === 120 ? (
                  <>
                    <div className="absolute left-[1px] top-0 w-[6px] h-[32px] bg-white/20" />
                    <span className="absolute left-[3px] top-[14px] text-white text-[12px]">120</span>
                  </>
                ) : <div className="w-[1.5px] h-[14px] bg-[#727272]" />}
              </div>
            ))}
          </div>
          <div className="ml-[8px] mt-[1px] w-[1596px] h-[2px] bg-[#5285a6] shrink-0" />
        </div>
        <div className="ml-[7px] w-[88px] h-[18px] bg-[#2b2b2b] rounded-[2px] flex items-center pl-[5px] shrink-0 text-[12px]">120</div>
        <div className="ml-[5.5px] flex">{play.map((x, i) => <Slot key={i} w="w-[23px]">{x}</Slot>)}</div>
      </div>
      {/* range slider */}
      <div className="h-[39px] shrink-0 flex items-center border-b-2 border-[#383838] text-[11.5px]">
        <div className="ml-[4px] mr-[8px]"><Dots cls="h-[28px]" /></div>
        <Field cls="w-[88px]">1</Field>
        <Field cls="ml-[8px] w-[88px]">1</Field>
        <div className="ml-[7px] w-[993px] h-[25px] bg-[#333333] shrink-0 flex items-center pl-[5px]">
          <div className="w-[860px] h-[20px] bg-[#5d5d5d] rounded-[3px] flex items-center px-[3px]">
            <div className="w-[15px] h-[14px] bg-[#969696] rounded-[3px]" />
            <span className="ml-[4px] flex-1">1</span>
            <span className="mr-[6px]">175</span>
            <div className="w-[15px] h-[14px] bg-[#969696] rounded-[3px]" />
          </div>
        </div>
        <Field cls="ml-[7px] w-[88px]">175</Field>
        <Field cls="ml-[8px] w-[88px]">200</Field>
        <div className="ml-[5px]"><Sep /></div>
        <div className="ml-[12px] w-[10px]"><svg width={10} height={6} className="block"><path d="M0.5 0.5h9L5 5.5z" fill="none" stroke="#aaa" /></svg></div>
        <Box cls="ml-[7px] w-[102px] h-[25px]">No Character Set</Box>
        <div className="ml-[11px] w-[10px]"><svg width={10} height={6} className="block"><path d="M0.5 0.5h9L5 5.5z" fill="none" stroke="#aaa" /></svg></div>
        <Box cls="ml-[6px] w-[102px] h-[25px]">No Anim Layer</Box>
        <div className="ml-[9px]"><Sep /></div>
        <div className="ml-[12px] w-[95px] h-[19px] bg-[#5d5d5d] rounded-[2px] flex items-center shrink-0"><span className="flex-1 pl-[3px]">24 fps</span><div className="w-[20px] h-[19px] bg-[#666] flex items-center justify-center"><Tri w={9} c="#ccc" /></div></div>
        <Slot w="ml-[10px] w-[24px]"><svg width={18} height={16} className="block"><path d="M2 8V6a2 2 0 0 1 2-2h11M16 8v2a2 2 0 0 1-2 2H3" fill="none" stroke="#ccc" strokeWidth={1.6} /><path d="M12 1l4 3-4 3zM6 9l-4 3 4 3z" fill="#ccc" /></svg></Slot>
        <div className="ml-[6px] w-[23px] h-[23px] bg-[#5285a6] border border-[#35d435] shrink-0 flex items-center justify-center"><svg width={19} height={17} className="block"><rect x={1} y={4} width={15} height={12} fill="#df964f" /><rect x={3} y={7} width={5} height={4} fill="#333" /><rect x={10} y={7} width={4} height={4} fill="#333" /><path d="M13 0v9l6-4z" fill="#ccc" /></svg></div>
        <div className="ml-[10px]"><Sep /></div>
        <Slot w="ml-[8px] w-[23px]"><svg width={20} height={20} className="block"><path d="M3 10a7 7 0 1 1 2 5" fill="none" stroke="#999" strokeWidth={1.4} strokeDasharray="3 1" /><path d="M10 5v6M7 10h6" stroke="#df7f3a" strokeWidth={1.6} /></svg></Slot>
        <Slot w="ml-[6px] w-[23px]"><svg width={22} height={22} className="block"><circle cx={5} cy={6} r={3} fill="none" stroke="#ccc" strokeWidth={2} /><circle cx={14} cy={6} r={2.5} fill="#df7f3a" /><path d="M12 9l-3 5-4 2M12 9l3 5 4 1M12 12l-2 8M14 15l3 5" fill="none" stroke="#df7f3a" strokeWidth={2} /></svg></Slot>
      </div>
      {/* command line */}
      <div className="flex-1 flex items-center min-h-0 text-[11.2px]">
        <div className="ml-[4px] mr-[8px]"><Dots cls="h-[24px]" /></div>
        <div className="w-[708px] h-[23px] bg-[#2b2b2b] shrink-0" />
        <div className="ml-[4px] mr-[2px]"><Dots cls="h-[8px]" /></div>
        <div className="ml-[1px] w-[1156px] h-[25px] bg-[#2b2b2b] shrink-0 flex items-center pl-[6px] text-[#c4c4c4]">
          <span className="w-[37px]">[rfm]</span>
          <span>INFO:&nbsp; (MainThread)&nbsp; txmanager_maya parse_new_maya_scene: New scene: resetting texture manager.</span>
        </div>
        <div className="ml-[6px] w-[19px] h-[24px] bg-[#bdbdbd] shrink-0 flex flex-col">
          <div className="h-[5px] border-b border-[#444]" />
          <div className="flex-1 flex items-center justify-center text-[#333] text-[11px] font-bold">{'{;}'}</div>
        </div>
      </div>
      {/* windows taskbar popup */}
      <div className="absolute left-[7px] bottom-0 w-[146px] h-[28px] bg-[#00b7c7] flex items-center">
        <div className="ml-[9px] w-[16px] h-[16px] bg-[#d6eef0] flex items-center justify-center text-[#17808d] font-bold text-[14px] shrink-0">M</div>
        <div className="ml-[1px] w-[12px] shrink-0"><svg width={10} height={11} className="block"><path d="M0.5 2.5h7v8h-7zM2.5 2.5v-2h7v8h-2" fill="none" stroke="#111" /></svg></div>
        <div className="ml-[34px] w-[10px] h-[11px] border border-[#111] shrink-0" />
        <div className="ml-[35px] shrink-0"><svg width={11} height={11} className="block"><path d="M0 0l11 11M11 0L0 11" stroke="#111" /></svg></div>
      </div>
    </div>
  );
}

function Tool({ children }: { children?: React.ReactNode }) {
  return <div className="mt-[1px] w-[36px] h-[36px] flex items-center justify-center"><svg width={32} height={32} viewBox="0 0 32 32" className="block">{children}</svg></div>;
}
